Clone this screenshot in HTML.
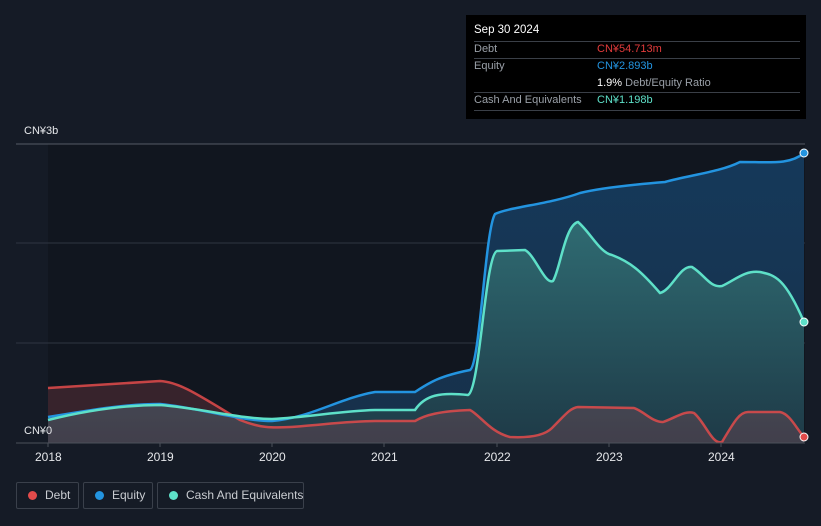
<!DOCTYPE html>
<html><head><meta charset="utf-8"><style>
html,body{margin:0;background:#151b26;width:821px;height:526px;overflow:hidden;font-family:"Liberation Sans",sans-serif;}
.tt{position:absolute;left:466px;top:15px;width:340px;height:104px;background:#000;color:#fff;font-size:11px;}
.tt .r{position:absolute;left:8px;right:6px;height:17px;line-height:17px;white-space:nowrap}
.ln{position:absolute;left:8px;right:6px;height:1px;background:#3a3f47}
.lab{color:#9aa0a8}
.leg{position:absolute;top:482px;height:27px;border:1px solid #3a404b;border-radius:2px;color:#c9ccd1;font-size:12px;line-height:25px;box-sizing:border-box;white-space:nowrap}
.dot{display:inline-block;width:9px;height:9px;border-radius:50%;margin:0 8px 0 11px;vertical-align:-1px}
.ax{position:absolute;color:#e6e8eb;font-size:11px}
</style></head><body>
<svg width="821" height="526" style="position:absolute;left:0;top:0">
<defs>
<linearGradient id="ge" x1="0" y1="0" x2="0" y2="1"><stop offset="0" stop-color="#15395a"/><stop offset="1" stop-color="#17304a"/></linearGradient>
<linearGradient id="gc" x1="0" y1="0" x2="0" y2="1"><stop offset="0" stop-color="#2f6b72"/><stop offset="1" stop-color="#1e3a47"/></linearGradient>
</defs>
<rect x="48" y="144" width="757" height="299" fill="#11161f"/>
<g stroke="#2e3541" stroke-width="1">
<line x1="16" y1="144" x2="805" y2="144" stroke="#555b66"/><line x1="16" y1="243" x2="805" y2="243"/><line x1="16" y1="343" x2="805" y2="343"/>
</g>
<path d="M48,417 C80,412 120,404 160,404 C200,408 240,421 272,421 C310,418 340,398 375,392 L415,392 C430,382 440,376 470,370 C480,365 485,230 495,214 C510,207 550,204 580,193 C600,188 640,184 665,182 C690,175 720,172 740,162 C770,162 790,165 804,153 L804,443 L48,443Z" fill="url(#ge)"/>
<path d="M48,420 C80,412 120,405 160,405 C200,408 240,419 272,419 C310,417 340,411 375,410 L415,410 C425,395 440,392 468,395 C480,390 485,255 497,251 L525,250 C535,255 545,285 553,281 C560,270 565,225 578,222 C590,232 600,253 612,255 C630,262 640,270 660,293 C672,290 680,265 692,267 C705,275 710,288 722,286 C735,280 745,270 760,272 C775,275 785,278 804,322 L804,443 L48,443Z" fill="url(#gc)"/>
<path d="M48,388 L160,381 C180,382 200,396 240,420 C260,428 272,428 290,427 C320,425 350,421 375,421 L415,421 C425,415 440,411 470,410 C480,415 490,432 510,437 C530,438 545,435 552,428 C565,415 570,408 578,407 L634,408 C645,412 652,422 663,422 C675,418 685,410 694,413 C705,422 712,445 722,442 C735,420 740,412 748,412 L780,412 C790,414 796,428 804,437 L804,443 L48,443Z" fill="rgba(190,80,90,0.22)"/>
<path d="M48,388 L160,381 C180,382 200,396 240,420 C260,428 272,428 290,427 C320,425 350,421 375,421 L415,421 C425,415 440,411 470,410 C480,415 490,432 510,437 C530,438 545,435 552,428 C565,415 570,408 578,407 L634,408 C645,412 652,422 663,422 C675,418 685,410 694,413 C705,422 712,445 722,442 C735,420 740,412 748,412 L780,412 C790,414 796,428 804,437" fill="none" stroke="#e24b4b" stroke-width="2.5" opacity="0.85"/>
<path d="M48,417 C80,412 120,404 160,404 C200,408 240,421 272,421 C310,418 340,398 375,392 L415,392 C430,382 440,376 470,370 C480,365 485,230 495,214 C510,207 550,204 580,193 C600,188 640,184 665,182 C690,175 720,172 740,162 C770,162 790,165 804,153" fill="none" stroke="#2394e0" stroke-width="2.5"/>
<path d="M48,420 C80,412 120,405 160,405 C200,408 240,419 272,419 C310,417 340,411 375,410 L415,410 C425,395 440,392 468,395 C480,390 485,255 497,251 L525,250 C535,255 545,285 553,281 C560,270 565,225 578,222 C590,232 600,253 612,255 C630,262 640,270 660,293 C672,290 680,265 692,267 C705,275 710,288 722,286 C735,280 745,270 760,272 C775,275 785,278 804,322" fill="none" stroke="#5ee0c8" stroke-width="2.5"/>
<line x1="16" y1="443" x2="805" y2="443" stroke="#4a505a"/>
<g stroke="#4a505a"><line x1="48" y1="443" x2="48" y2="447"/><line x1="160" y1="443" x2="160" y2="447"/><line x1="272" y1="443" x2="272" y2="447"/><line x1="384" y1="443" x2="384" y2="447"/><line x1="497" y1="443" x2="497" y2="447"/><line x1="609" y1="443" x2="609" y2="447"/><line x1="721" y1="443" x2="721" y2="447"/></g>
<circle cx="804" cy="153" r="4" fill="#2394e0" stroke="#fff" stroke-width="1"/>
<circle cx="804" cy="322" r="4" fill="#5ee0c8" stroke="#fff" stroke-width="1"/>
<circle cx="804" cy="437" r="4" fill="#e24b4b" stroke="#fff" stroke-width="1"/>
</svg>
<div class="ax" style="left:24px;top:125px">CN¥3b</div>
<div class="ax" style="left:24px;top:425px">CN¥0</div>
<div class="ax" style="left:35px;top:450px;font-size:12px">2018</div>
<div class="ax" style="left:147px;top:450px;font-size:12px">2019</div>
<div class="ax" style="left:259px;top:450px;font-size:12px">2020</div>
<div class="ax" style="left:371px;top:450px;font-size:12px">2021</div>
<div class="ax" style="left:484px;top:450px;font-size:12px">2022</div>
<div class="ax" style="left:596px;top:450px;font-size:12px">2023</div>
<div class="ax" style="left:708px;top:450px;font-size:12px">2024</div>
<div class="tt">
<div style="position:absolute;left:8px;top:9px;font-size:11.5px">Sep 30 2024</div>
<div class="ln" style="top:26px"></div>
<div class="r" style="top:26px"><span class="lab">Debt</span><span style="position:absolute;left:123px;color:#e23b3b">CN¥54.713m</span></div>
<div class="ln" style="top:43px"></div>
<div class="r" style="top:43px"><span class="lab">Equity</span><span style="position:absolute;left:123px;color:#2394e0">CN¥2.893b</span></div>
<div class="r" style="top:60px;left:131px">1.9% <span class="lab">Debt/Equity Ratio</span></div>
<div class="ln" style="top:77px"></div>
<div class="r" style="top:77px"><span class="lab">Cash And Equivalents</span><span style="position:absolute;left:123px;color:#5ee0c8">CN¥1.198b</span></div>
<div class="ln" style="top:95px"></div>
</div>
<div class="leg" style="left:16px;width:63px"><span class="dot" style="background:#e24b4b"></span>Debt</div>
<div class="leg" style="left:83px;width:70px"><span class="dot" style="background:#2394e0"></span>Equity</div>
<div class="leg" style="left:157px;width:147px"><span class="dot" style="background:#5ee0c8"></span>Cash And Equivalents</div>
</body></html>
